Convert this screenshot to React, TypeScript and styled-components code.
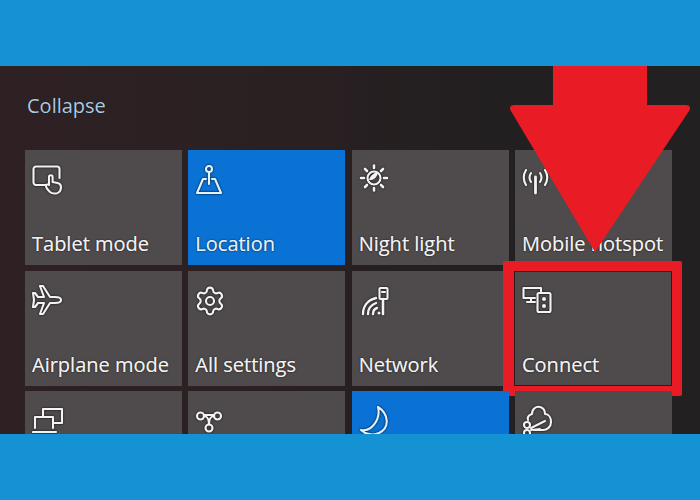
import React from "react";
import styled, { createGlobalStyle } from "styled-components";
import { Settings } from "lucide-react";

const Global = createGlobalStyle`
  html, body { margin: 0; padding: 0; background: #1592d3; }
`;

const Page = styled.div`
  position: relative;
  width: 700px;
  height: 500px;
  overflow: hidden;
  display: flex;
  flex-direction: column;
  background: #1592d3;
  font-family: "Open Sans", "Noto Sans", "Liberation Sans", sans-serif;
`;

const Panel = styled.section`
  margin-top: 66px;
  height: 368px;
  overflow: hidden;
  box-sizing: border-box;
  padding: 25px 28px 0 25px;
  background: linear-gradient(90deg, #2f2123 0%, #2a2022 40%, #231f20 65%, #222021 100%);
`;

const Collapse = styled.div`
  height: 59px;
  padding-left: 2px;
  font-size: 20px;
  line-height: 29px;
  letter-spacing: 0;
  color: #a9cce4;
  text-shadow: 0 0 1px rgba(0, 0, 0, 0.7);
`;

const Grid = styled.div`
  display: grid;
  grid-template-columns: repeat(4, 157px);
  grid-auto-rows: 115px;
  column-gap: 6.33px;
  row-gap: 5.5px;
`;

const Tile = styled.div<{ $on?: boolean }>`
  position: relative;
  display: flex;
  flex-direction: column;
  justify-content: space-between;
  box-sizing: border-box;
  padding: 14px 0 8px 7px;
  background: ${(p) => (p.$on ? "#0a72d4" : "#4f4b4c")};
  color: ${(p) => (p.$on ? "#e4f2fd" : "#f4f3f3")};
`;

const Label = styled.span`
  font-size: 20px;
  line-height: 27px;
  letter-spacing: 0;
  white-space: nowrap;
  text-shadow: 0 0 2px rgba(0, 0, 0, 0.85), 0 0 0.5px currentColor;
`;

const Icon = styled.svg.attrs({ viewBox: "0 0 32 32", width: 32, height: 32 })`
  display: block;
  flex: none;
  fill: none;
  stroke: currentColor;
  stroke-width: 2.1;
  stroke-linejoin: round;
  stroke-linecap: round;
  filter: drop-shadow(0 0 1px rgba(0, 0, 0, 0.85));
`;

const GearIcon = styled(Settings)`
  display: block;
  flex: none;
  margin-left: -1px;
  filter: drop-shadow(0 0 1px rgba(0, 0, 0, 0.85));
`;

const Highlight = styled.div`
  position: absolute;
  inset: -10px -10px -10px -12px;
  border: 10px solid #e91c25;
  border-left-width: 11px;
  border-radius: 2px;
  box-shadow: inset 0 0 0 1px #2c1a1c;
  pointer-events: none;
`;

const Arrow = styled.svg`
  position: absolute;
  left: 500px;
  top: 66px;
  pointer-events: none;
`;

const tiles: { id: string; label?: string; on?: boolean; hot?: boolean; icon: React.ReactNode }[] = [
  {
    id: "tablet",
    label: "Tablet mode",
    icon: (
      <Icon>
        <path d="M14 21H4a2.500 2.500 0 0 1-2.500-2.500V5A2.500 2.500 0 0 1 4 2.500h21A2.500 2.500 0 0 1 27.500 5v9" />
        <path d="M18 28c-2-2-4-4-4-6 0-1.500 1.500-2 3-1v-8a1.800 1.800 0 0 1 3.600 0v5l5 1c2 .5 3.400 1.500 3.400 4 0 2.500-1 4.500-2.500 5.500-2 1.500-6 1.500-8.500-.5z" />
      </Icon>
    ),
  },
  {
    id: "location",
    label: "Location",
    on: true,
    icon: (
      <Icon>
        <circle cx="14" cy="5" r="3" />
        <path d="M14 8v12M11 15H8L2 29h24l-6-14h-3" />
      </Icon>
    ),
  },
  {
    id: "night",
    label: "Night light",
    icon: (
      <Icon>
        <circle cx="15" cy="14" r="6.500" />
        <path d="M10 16c1-4 4-7 9-8-.5 5-4 8.500-9 8z" fill="currentColor" stroke="none" />
        <path d="M15 1.500v2.500M15 24v2.500M2 14h3M25 14h3M6 5l2 2M24 5l-2 2M6 23l2-2M24 23l-2-2" strokeWidth="2.600" />
      </Icon>
    ),
  },
  {
    id: "hotspot",
    label: "Mobile hotspot",
    icon: (
      <Icon>
        <path d="M13.500 13v16" strokeWidth="2.800" />
        <path d="M9 9c-2 3-2 6 0 9M18 9c2 3 2 6 0 9M4 6c-3 5-3 10 0 15M23 6c3 5 3 10 0 15" />
      </Icon>
    ),
  },
  {
    id: "airplane",
    label: "Airplane mode",
    icon: (
      <Icon>
        <path d="M29 15c0-2-3-3-6-3h-5L11 1H8l4 11H6L3 8H1l1 7-1 7h2l3-4h6L8 29h3l7-11h5c3 0 6-1 6-3z" />
      </Icon>
    ),
  },
  {
    id: "settings",
    label: "All settings",
    icon: <GearIcon size={32} strokeWidth={1.600} />,
  },
  {
    id: "network",
    label: "Network",
    icon: (
      <Icon>
        <path d="M4 29c0-8 5-14 13-16M9 29c0-5 3-9 8-11M14 29c0-2 1-5 4-6" strokeWidth="2.400" />
        <path d="M24 14v15" strokeWidth="2.600" />
        <rect x="20.500" y="3" width="8" height="11" rx="1" />
        <path d="M23 7h3" />
        <circle cx="20" cy="28" r="1.500" fill="currentColor" stroke="none" />
      </Icon>
    ),
  },
  {
    id: "connect",
    label: "Connect",
    hot: true,
    icon: (
      <Icon>
        <path d="M13 13H1.500V3H19v4M5 17h8M9 13v4" />
        <rect x="15.500" y="8" width="13" height="19" rx="1.500" />
        <circle cx="22" cy="14" r="2" fill="currentColor" stroke="none" />
        <circle cx="22" cy="21" r="2" fill="currentColor" stroke="none" />
      </Icon>
    ),
  },
  {
    id: "project",
    icon: (
      <Icon>
        <path d="M11 11V4h19v14h-9" />
        <path d="M3 23V12h18v11M1 27h23" />
      </Icon>
    ),
  },
  {
    id: "vpn",
    icon: (
      <Icon>
        <circle cx="5.500" cy="11" r="3.500" />
        <circle cx="22.500" cy="11" r="3.500" />
        <circle cx="14" cy="23" r="3.500" />
        <path d="M9 11c3 0 5 3 5 8.500M19 11c-3 0-5 3-5 8.500M9 10h10" />
      </Icon>
    ),
  },
  {
    id: "moon",
    on: true,
    icon: (
      <Icon>
        <path d="M19 2c11 7 12 21 1 26-6 3-14 1-18-3 10 2 20-10 17-23z" />
      </Icon>
    ),
  },
  {
    id: "snip",
    icon: (
      <Icon>
        <path d="M6 15c-1-3 1-5 4-6 0-5 4-8 8-7 4 1 5 4 5 7 4 0 6 4 6 8 0 5-4 8-8 8h-9" />
        <path d="M9 23l14-7M9 25l9-1" />
        <circle cx="5" cy="20" r="3" />
        <circle cx="5" cy="28" r="3" />
      </Icon>
    ),
  },
];

export default function App() {
  return (
    <Page>
      <Global />
      <Panel>
        <Collapse>Collapse</Collapse>
        <Grid>
          {tiles.map((t) => (
            <Tile key={t.id} $on={t.on}>
              {t.icon}
              {t.label && <Label>{t.label}</Label>}
              {t.hot && <Highlight />}
            </Tile>
          ))}
        </Grid>
      </Panel>
      <Arrow width="200" height="190" viewBox="0 0 200 190">
        <path
          d="M53 0H147V39H186C190 39 191 42 189 45L95 186 11 45C9 42 10 39 14 39H53Z"
          fill="#e91c25"
        />
      </Arrow>
    </Page>
  );
}
